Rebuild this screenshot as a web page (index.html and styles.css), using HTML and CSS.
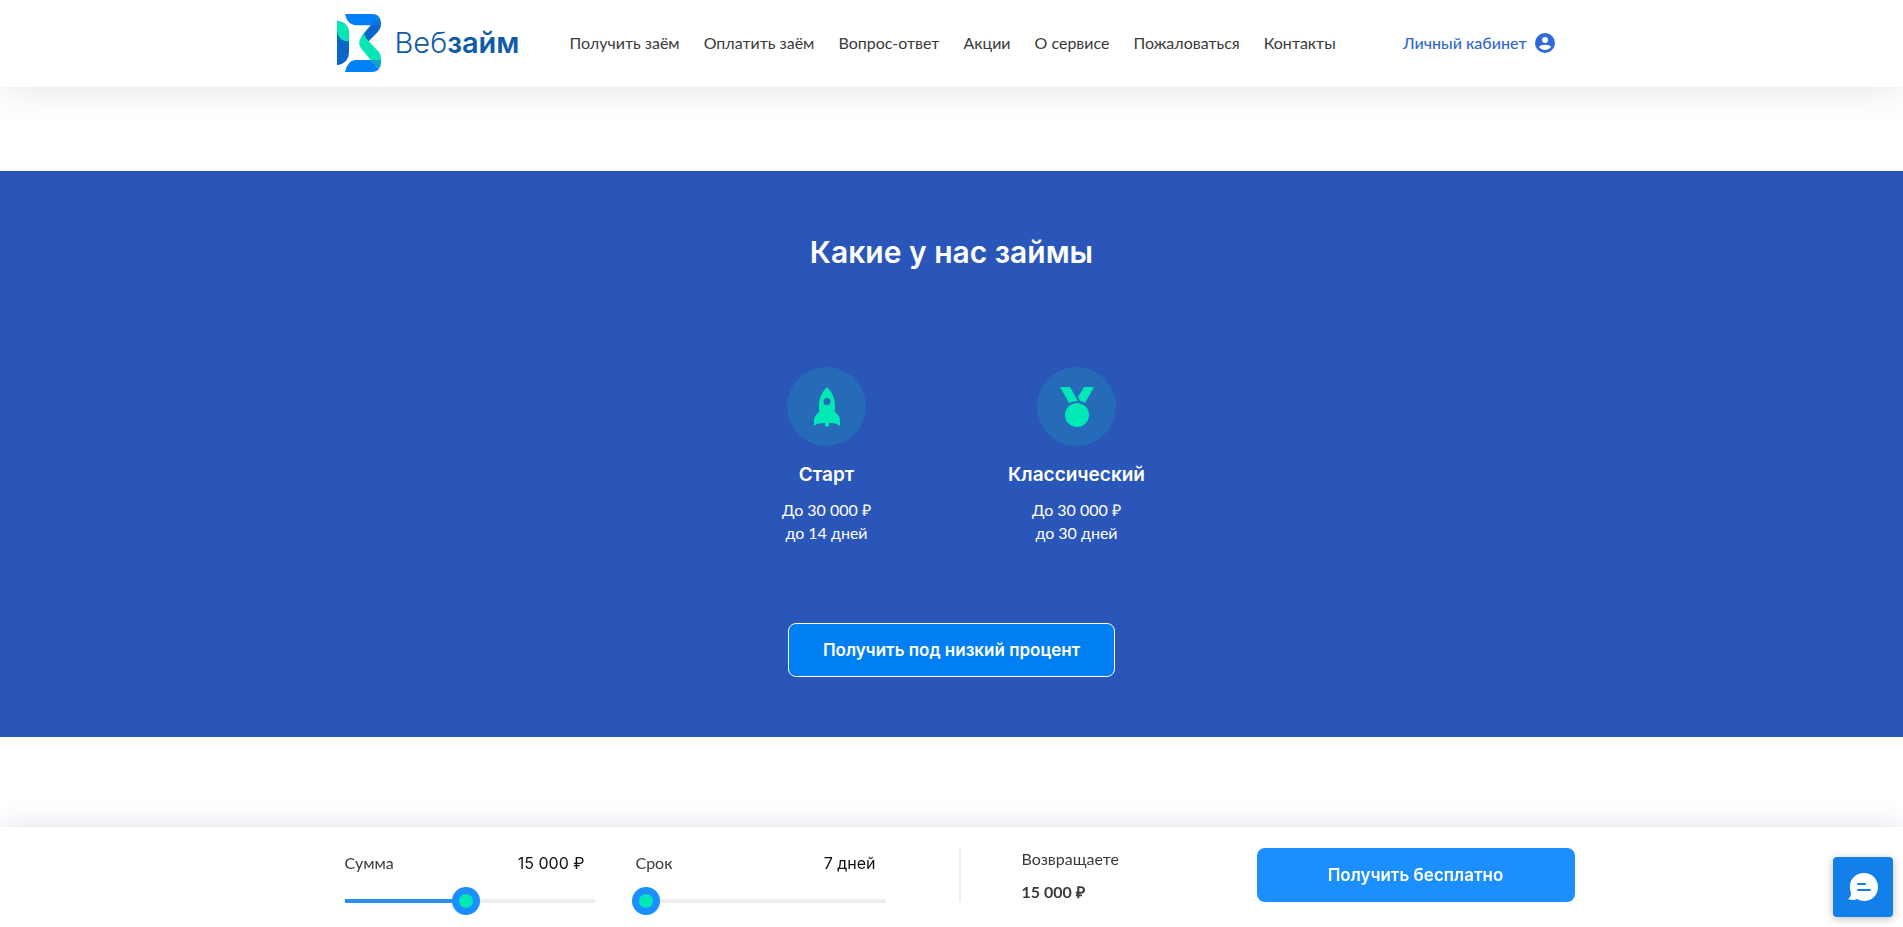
FILE: index.html
```html
<!DOCTYPE html>
<html lang="ru">
<head>
<meta charset="utf-8">
<meta name="viewport" content="width=device-width, initial-scale=1">
<title>Вебзайм</title>
<link rel="stylesheet" href="styles.css">
</head>
<body>
<header class="header">
  <div class="header-inner">
    <a class="logo" href="#">
      <svg class="logo-mark" viewBox="51 42 132 174" aria-hidden="true">
        <path fill="#0a66c8" d="M51 62Q87 68 87 102V158Q87 188 51 196Z"/>
        <path fill="#08e6b4" d="M51 62Q87 68 87 102V124Q54 124 51 92Z"/>
        <path fill="#0a66c8" d="M183 66V76Q182 86 174 95L146 124L122 118Q124 110 130 102L152 76L164 56Z"/>
        <path fill="#08e6b4" d="M132 100Q136 114 146 124L174 153Q183 162 183 176V188L166 198L152 180L122 143Q113 131 122 115Z"/>
        <path fill="#0080f5" d="M75 42H156Q170 42 177 50L152 76H106Q82 74 75 42Z"/>
        <path fill="#1273dc" d="M177 50Q183 57 183 68V76H152Z"/>
        <path fill="#0080f5" d="M75 216Q82 182 106 180H152L177 207Q169 216 156 216Z"/>
        <path fill="#10a3c8" d="M152 180H183V188Q183 200 177 207Z"/>
      </svg>
      <span class="logo-text">Веб<b>займ</b></span>
    </a>
    <nav class="nav">
      <a href="#">Получить заём</a>
      <a href="#">Оплатить заём</a>
      <a href="#">Вопрос-ответ</a>
      <a href="#">Акции</a>
      <a href="#">О сервисе</a>
      <a href="#">Пожаловаться</a>
      <a href="#">Контакты</a>
    </nav>
    <a class="account" href="#">Личный кабинет
      <svg viewBox="0 0 20 20" width="20" height="20" aria-hidden="true">
        <circle cx="10" cy="10" r="10" fill="#2f6ad9"/>
        <circle cx="10" cy="7" r="3" fill="#fff"/>
        <path fill="#fff" d="M4 14C5 11 15 11 16 14C13 18 7 18 4 14Z"/>
      </svg>
    </a>
  </div>
</header>
<main>
  <section class="loans">
    <h2 class="loans-title">Какие у нас займы</h2>
    <div class="loan-list">
      <article class="loan">
        <div class="loan-icon">
          <svg viewBox="0 0 26 40" width="26" height="40" aria-hidden="true">
            <path fill="#00e8b5" fill-rule="evenodd" d="M13 0C18 5 21 11 21 18V25C24 27 26 30 26 33V39C22 36 19 36 15 36V39Q13 40 11 39V36C7 36 4 36 0 39V33C0 30 2 27 5 25V18C5 11 8 5 13 0ZM13 11a3.500 3.500 0 1 0 0 7a3.500 3.500 0 1 0 0-7Z"/>
          </svg>
        </div>
        <h3>Старт</h3>
        <p>До 30 000 ₽<br>до 14 дней</p>
      </article>
      <article class="loan">
        <div class="loan-icon">
          <svg viewBox="0 0 34 40" width="34" height="40" aria-hidden="true">
            <path fill="#00e8b5" d="M0 0H10L18 14Q13 14 9 16ZM24 0H34L25 16Q22 14 20 14L18 10Z"/>
            <circle cx="17" cy="28" r="12" fill="#00e8b5"/>
          </svg>
        </div>
        <h3>Классический</h3>
        <p>До 30 000 ₽<br>до 30 дней</p>
      </article>
    </div>
    <button class="btn btn-outlined" type="button">Получить под низкий процент</button>
  </section>
</main>
<footer class="calc">
  <div class="calc-inner">
    <div class="field">
      <div class="field-head"><label for="sum">Сумма</label><output for="sum">15 000 ₽</output></div>
      <input class="range range-half" id="sum" type="range" min="1000" max="30000" step="1000" value="15000">
    </div>
    <div class="field">
      <div class="field-head"><label for="term">Срок</label><output for="term">7 дней</output></div>
      <input class="range" id="term" type="range" min="7" max="30" value="7">
    </div>
    <div class="result">
      <span>Возвращаете</span>
      <strong>15 000 ₽</strong>
    </div>
    <button class="btn btn-free" type="button">Получить бесплатно</button>
  </div>
</footer>
<button class="chat" type="button" aria-label="Чат">
  <svg viewBox="0 0 30 28" width="30" height="28" aria-hidden="true">
    <path fill="#fff" d="M16 0C24 0 30 6 30 14S24 28 16 28Q12 28 9 26Q5 28 0 26Q3 24 3 20C-1 9 6 0 16 0Z"/>
    <path stroke="#1380ea" stroke-width="2" stroke-linecap="round" d="M10 11H17M10 17H22"/>
  </svg>
</button>
</body>
</html>
```
FILE: styles.css
```css
* { box-sizing: border-box; }
body {
  margin: 0;
  min-height: 100vh;
  background: #fff;
  color: #3a3a3a;
  font: 16px/24px Lato, "Open Sans", sans-serif;
}
a { color: inherit; text-decoration: none; }
h2, h3, p { margin: 0; }
.header {
  position: sticky;
  top: 0;
  z-index: 2;
  background: #fff;
  box-shadow: 0 0 40px rgba(0, 0, 0, 0.12);
}
.header-inner {
  display: flex;
  align-items: center;
  max-width: 1230px;
  margin: 0 auto;
  padding: 14px 12px 15px 0;
}
.logo { display: flex; align-items: center; gap: 14px; color: #0f5ba5; }
.logo-mark { width: 44px; height: 58px; }
.logo-text { font: 300 29px/36px Inter, sans-serif; }
.logo-text b { font-weight: 600; }
.nav { display: flex; gap: 24px; margin-left: 50px; white-space: nowrap; }
.account {
  display: flex;
  align-items: center;
  gap: 8px;
  margin-left: auto;
  color: #3167cb;
  font-weight: 500;
}
.loans {
  display: flex;
  flex-direction: column;
  align-items: center;
  margin-top: 84px;
  padding: 60px 0;
  background: #2a56b9;
  color: #fff;
}
.loans-title { font: 600 30px/42px Inter, sans-serif; }
.loan-list { display: flex; margin: 94px 0 79px; }
.loan { width: 250px; text-align: center; }
.loan-icon {
  display: grid;
  place-items: center;
  width: 79px;
  height: 79px;
  margin: 0 auto 17px;
  border-radius: 50%;
  background: #256bb8;
}
.loan h3 { font: 600 19px/24px Inter, sans-serif; }
.loan p { margin-top: 11px; line-height: 23px; }
.btn {
  height: 54px;
  border: 0;
  border-radius: 8px;
  color: #fff;
  font: 600 17px/24px Inter, sans-serif;
  cursor: pointer;
}
.btn-outlined { padding: 0 34px; border: 1px solid #fff; background: #007ff3; }
.calc {
  position: fixed;
  right: 0;
  bottom: 0;
  left: 0;
  background: #fff;
  box-shadow: 0 0 24px rgba(40, 60, 130, 0.16);
}
.calc-inner {
  display: flex;
  max-width: 1246px;
  margin: 0 auto;
  padding: 21px 0 12px 16px;
}
.field { width: 250px; margin-right: 41px; padding-top: 3px; }
.field-head { display: flex; justify-content: space-between; padding-right: 10px; }
.field output { color: #111; font: 16px/24px Inter, sans-serif; }
.range {
  display: block;
  width: 258px;
  height: 28px;
  margin: 12px -4px 0;
  appearance: none;
  background: none;
}
.range::-webkit-slider-runnable-track {
  height: 28px;
  background: linear-gradient(#ededed, #ededed) center / 250px 4px no-repeat;
}
.range-half::-webkit-slider-runnable-track {
  background: linear-gradient(90deg, #2b8ff0 48%, #ededed 48%) center / 250px 4px no-repeat;
}
.range::-webkit-slider-thumb {
  width: 28px;
  height: 28px;
  appearance: none;
  border: 7px solid #1b8fff;
  border-radius: 50%;
  background: #00e8b5;
}
.result {
  display: flex;
  flex-direction: column;
  gap: 11px;
  height: 54px;
  margin-left: 32px;
  padding-left: 61px;
  border-left: 2px solid #eee;
  line-height: 22px;
}
.btn-free { width: 318px; margin-left: auto; background: #1b8fff; }
.chat {
  position: fixed;
  right: 10px;
  bottom: 10px;
  z-index: 3;
  display: grid;
  place-items: center;
  width: 60px;
  height: 60px;
  padding: 0;
  border: 0;
  border-radius: 4px;
  background: #1380ea;
  box-shadow: 0 2px 8px rgba(0, 0, 0, 0.25);
}
```
